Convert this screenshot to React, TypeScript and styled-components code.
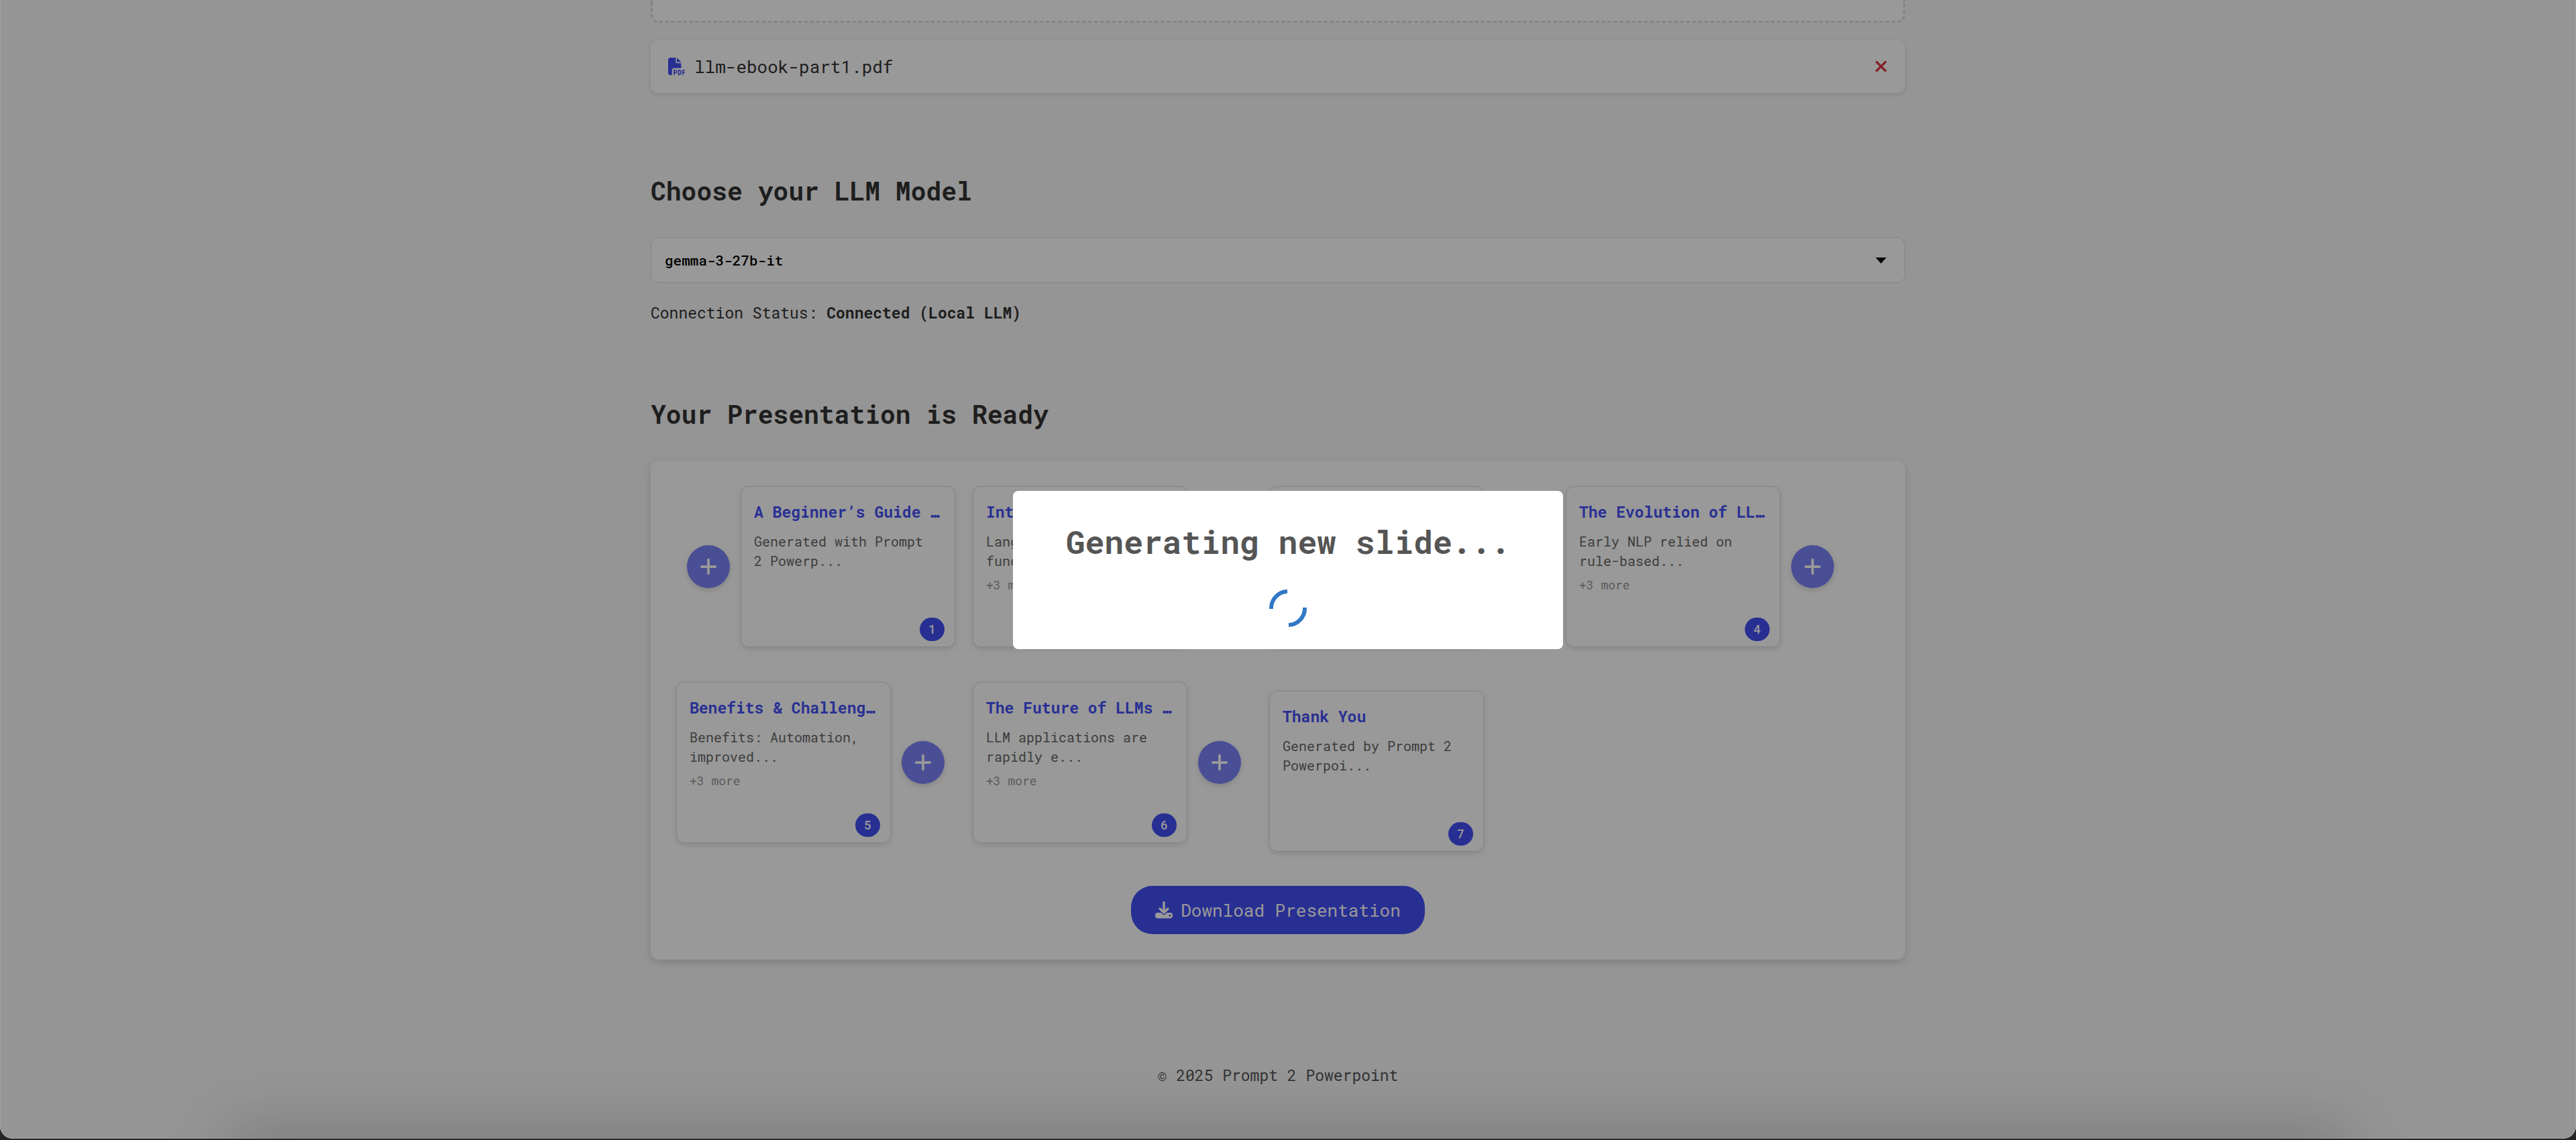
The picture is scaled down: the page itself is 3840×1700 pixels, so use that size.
import React from "react";
import styled, { createGlobalStyle } from "styled-components";
import { FaFilePdf, FaPlus, FaXmark } from "react-icons/fa6";

const blue = "#444ff6";
const mono = `"Roboto Mono", "DejaVu Sans Mono", monospace`;

const GlobalStyle = createGlobalStyle`
  *, *::before, *::after { box-sizing: border-box; }
  html { background: #252427; }
  body {
    margin: 0;
    color: #333;
    font-family: ${mono};
    font-size: 23px;
    line-height: 36px;
  }
  h1, h2, h3, p { margin: 0; }
  button, select { font-family: inherit; }
`;

const Window = styled.div`
  position: relative;
  display: flow-root;
  min-height: calc(100vh - 2px);
  padding: 0 30px 0 0;
  background: #f8f8f8;
  border-radius: 0 0 19px 19px;
  overflow: hidden;
`;

const Main = styled.main`
  max-width: 1870px;
  margin: 0 auto;
`;

const DropZone = styled.div`
  height: 34px;
  background: #fff;
  border: 3px dashed #ddd;
  border-top: 0;
  border-radius: 0 0 12px 12px;
`;

const FileRow = styled.div`
  display: flex;
  align-items: center;
  gap: 13px;
  height: 80px;
  margin-top: 25px;
  padding: 0 26px;
  background: #fff;
  border-radius: 12px;
  box-shadow: 0 2px 6px rgba(0, 20, 10, 0.12);
  font-size: 26px;
  svg { width: 26px; height: 26px; color: ${blue}; }
`;

const RemoveButton = styled.button`
  display: flex;
  margin-left: auto;
  padding: 0;
  border: 0;
  background: none;
  svg { width: 20px; height: 26px; color: #dc3545; }
`;

const Section = styled.section`
  margin-top: 113px;
  & + & { margin-top: 101px; }
`;

const Heading = styled.h2`
  margin-bottom: 38px;
  font-size: 38px;
  line-height: 64px;
  font-weight: 700;
`;

const SelectBox = styled.div`
  position: relative;
  svg {
    position: absolute;
    right: 28px;
    top: 30px;
    width: 16px;
    height: 9px;
    pointer-events: none;
  }
`;

const Select = styled.select`
  appearance: none;
  display: block;
  width: 100%;
  height: 68px;
  padding: 0 20px;
  color: #000;
  background: #fff;
  border: 1px solid #ddd;
  border-radius: 12px;
  font-size: 21px;
  font-weight: 500;
`;

const Status = styled.p`
  margin-top: 26px;
`;

const Panel = styled.div`
  padding: 38px;
  background: #fff;
  border-radius: 12px;
  box-shadow: 0 4px 12px rgba(0, 20, 10, 0.15);
`;

const Slides = styled.div`
  display: flex;
  flex-wrap: wrap;
  align-items: center;
  gap: 26px;
`;

const Slot = styled.div`
  display: flex;
  align-items: center;
  margin-bottom: 26px;
  &:last-child { margin-bottom: 0; }
`;

const Card = styled.article`
  position: relative;
  width: 320px;
  height: 240px;
  padding: 19px;
  background: #fff;
  border: 1px solid #ddd;
  border-radius: 12px;
  box-shadow: 0 3px 8px rgba(0, 0, 0, 0.12);
`;

const CardTitle = styled.h3`
  overflow: hidden;
  white-space: nowrap;
  text-overflow: ellipsis;
  color: ${blue};
  font-size: 23px;
  line-height: 36px;
`;

const CardText = styled.p`
  margin-top: 12px;
  padding-right: 8px;
  color: #666;
  font-size: 20px;
  line-height: 29px;
`;

const CardMore = styled.p`
  margin-top: 7px;
  color: #999;
  font-size: 18px;
  line-height: 29px;
`;

const Badge = styled.span`
  position: absolute;
  right: 15px;
  bottom: 8px;
  width: 37px;
  height: 35px;
  border-radius: 18px;
  background: ${blue};
  color: #fff;
  font-size: 18px;
  font-weight: 500;
  line-height: 35px;
  text-align: center;
`;

const AddButton = styled.button`
  display: flex;
  align-items: center;
  justify-content: center;
  width: 64px;
  height: 64px;
  margin: 0 16px;
  padding: 0;
  border: 0;
  border-radius: 50%;
  background: ${blue};
  color: #fff;
  opacity: 0.7;
  box-shadow: 0 3px 8px rgba(0, 0, 0, 0.2);
  svg { width: 30px; height: 30px; }
`;

const Download = styled.button`
  display: flex;
  align-items: center;
  gap: 12px;
  height: 72px;
  margin: 38px auto 0;
  padding: 0 36px;
  border: 0;
  border-radius: 32px;
  background: ${blue};
  color: #fff;
  font-size: 26px;
  svg { width: 26px; height: 26px; }
`;

const Footer = styled.footer`
  padding: 154px 0 60px;
  color: #555;
  text-align: center;
`;

const Overlay = styled.div`
  position: absolute;
  inset: 0;
  z-index: 2;
  background: rgba(0, 0, 0, 0.4);
  border: 1px solid rgba(255, 255, 255, 0.12);
  border-top: 0;
  border-radius: 0 0 19px 19px;
`;

const DockShadow = styled.div`
  position: absolute;
  left: 350px;
  right: 350px;
  bottom: -40px;
  z-index: 3;
  height: 40px;
  box-shadow: 0 0 90px 10px rgba(0, 0, 0, 0.22);
`;

const ModalLayer = styled.div`
  position: fixed;
  inset: 0;
  z-index: 4;
  display: flex;
  align-items: center;
  justify-content: center;
`;

const Modal = styled.div`
  display: flex;
  flex-direction: column;
  align-items: center;
  gap: 36px;
  padding: 42px 79px 32px;
  background: #fff;
  border-radius: 8px;
  svg { width: 58px; height: 58px; }
`;

const ModalTitle = styled.h1`
  color: #555;
  font-size: 48px;
  line-height: 68px;
`;

type Slide = { title: string; text: string; more?: boolean };

const slides: Slide[] = [
  { title: "A Beginner’s Guide to LLMs", text: "Generated with Prompt 2 Powerp..." },
  { title: "Introduction to LLMs", text: "Language models are fundamenta...", more: true },
  { title: "How LLMs Work", text: "Neural networks trained on...", more: true },
  { title: "The Evolution of LLMs Over Time", text: "Early NLP relied on rule-based...", more: true },
  { title: "Benefits & Challenges of LLMs", text: "Benefits: Automation, improved...", more: true },
  { title: "The Future of LLMs and AI", text: "LLM applications are rapidly e...", more: true },
  { title: "Thank You", text: "Generated by Prompt 2 Powerpoi..." },
];

const Add = () => (
  <AddButton aria-label="Add slide">
    <FaPlus />
  </AddButton>
);

const DownloadIcon = () => (
  <svg viewBox="0 0 26 26" fill="none" aria-hidden="true">
    <path d="M13 1.800v15M7 11l6 6 6-6" stroke="currentColor" strokeWidth="3.4" strokeLinecap="round" strokeLinejoin="round" />
    <path
      fill="currentColor"
      fillRule="evenodd"
      d="M4 17h4.700l2.800 2.700q1.500 1.300 3 0L17.300 17H22a4 4 0 0 1 4 4v.600a4 4 0 0 1-4 4H4a4 4 0 0 1-4-4V21a4 4 0 0 1 4-4zm17.800 5.800a1.500 1.500 0 1 0 0-3 1.500 1.500 0 0 0 0 3z"
    />
  </svg>
);

export default function App() {
  const last = slides.length - 1;
  return (
    <>
      <GlobalStyle />
      <Window>
        <Main>
          <DropZone />
          <FileRow>
            <FaFilePdf />
            <span>llm-ebook-part1.pdf</span>
            <RemoveButton aria-label="Remove file">
              <FaXmark />
            </RemoveButton>
          </FileRow>
          <Section>
            <Heading id="model-label">Choose your LLM Model</Heading>
            <SelectBox>
              <Select aria-labelledby="model-label" defaultValue="gemma-3-27b-it">
                <option>gemma-3-27b-it</option>
              </Select>
              <svg viewBox="0 0 16 9" aria-hidden="true">
                <path d="M0 0h16L8 9z" />
              </svg>
            </SelectBox>
            <Status>
              Connection Status: <strong>Connected (Local LLM)</strong>
            </Status>
          </Section>
          <Section>
            <Heading>Your Presentation is Ready</Heading>
            <Panel>
              <Slides>
                {slides.map((slide, i) => (
                  <Slot key={slide.title}>
                    {i === 0 && <Add />}
                    <Card>
                      <CardTitle>{slide.title}</CardTitle>
                      <CardText>{slide.text}</CardText>
                      {slide.more && <CardMore>+3 more</CardMore>}
                      <Badge>{i + 1}</Badge>
                    </Card>
                    {i > 0 && i < last && <Add />}
                  </Slot>
                ))}
              </Slides>
              <Download>
                <DownloadIcon />
                Download Presentation
              </Download>
            </Panel>
          </Section>
        </Main>
        <Footer>© 2025 Prompt 2 Powerpoint</Footer>
        <Overlay />
        <DockShadow />
      </Window>
      <ModalLayer>
        <Modal role="dialog" aria-modal="true" aria-labelledby="modal-title">
          <ModalTitle id="modal-title">Generating new slide...</ModalTitle>
          <svg viewBox="0 0 58 58" fill="none" stroke="#3178c6" strokeWidth="6" aria-hidden="true">
            <path d="M4 30A25 25 0 0 1 28 4" />
            <path d="M54 28A25 25 0 0 1 30 54" />
          </svg>
        </Modal>
      </ModalLayer>
    </>
  );
}
